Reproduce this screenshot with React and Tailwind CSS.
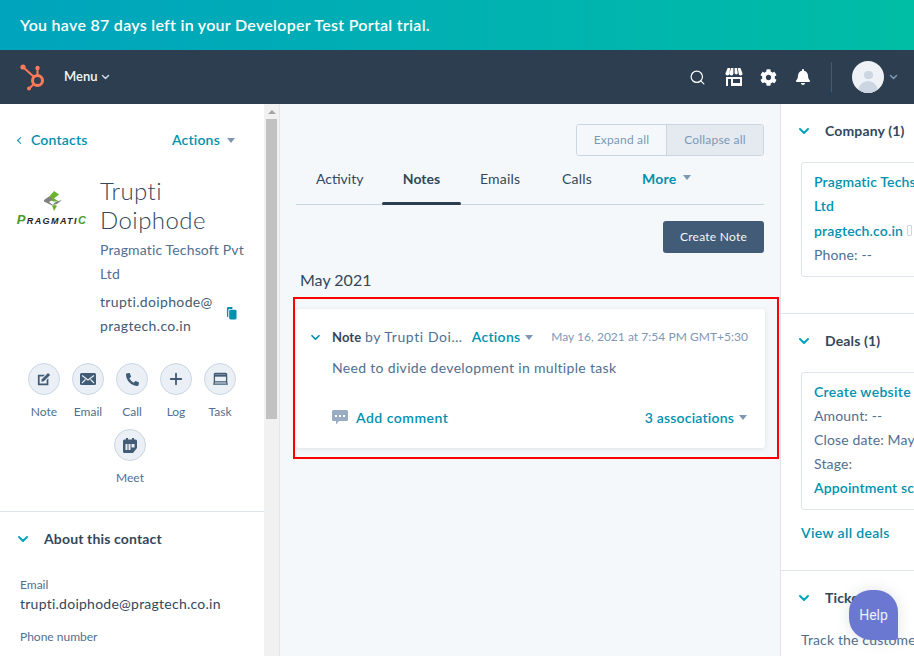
import React from "react";
import { FaCog, FaBell, FaPhoneAlt } from "react-icons/fa";
import { Search, Plus } from "lucide-react";

const Chevron = ({ className = "" }) => (
  <svg viewBox="0 0 12 8" className={className} fill="none" stroke="currentColor" strokeWidth="2" strokeLinecap="round" strokeLinejoin="round"><path d="M2 2l4 4 4-4" /></svg>
);
const Caret = ({ className = "" }) => (
  <span className={`inline-block w-0 h-0 border-l-[4.5px] border-r-[4.5px] border-t-[5px] border-l-transparent border-r-transparent border-t-[#7c98b6] ${className}`} />
);

const Sprocket = () => (
  <svg viewBox="0 0 26 27" className="w-[26px] h-[27px]" fill="none">
    <g stroke="#ff7a59">
      <circle cx="17.5" cy="16.5" r="5" strokeWidth="3" />
      <path d="M3.5 3.5l10 9" strokeWidth="2" />
      <path d="M17.5 5v6" strokeWidth="2" />
      <path d="M13.5 20.5l-4.5 4" strokeWidth="2" />
    </g>
    <circle cx="3" cy="3" r="2.6" fill="#ff7a59" />
    <circle cx="17.5" cy="4" r="2.2" fill="#ff7a59" />
    <circle cx="9" cy="24.5" r="2" fill="#ff7a59" />
  </svg>
);

const Store = () => (
  <svg viewBox="0 0 18 18" className="w-[18px] h-[18px]" fill="#fff">
    <path d="M2.6 0h2.6L4.4 5.6a1.9 1.9 0 0 1-4 0zM6 0h2.4v5.6a2 2 0 0 1-4 0zM9.6 0H12l.8 5.6a2 2 0 0 1-3.2 0zM12.8 0h2.6l2.2 5.6a1.9 1.9 0 0 1-4 0z" />
    <path fillRule="evenodd" d="M1 9h16v9H1zM3 11v7h3v-7zM8 11v4h7v-4z" />
  </svg>
);

const ActionBtn = ({ label, className = "", children }) => (
  <div className={`w-[44px] flex flex-col items-center ${className}`}>
    <div className="w-8 h-8 rounded-full bg-[#eaf0f6] border border-[#cbd6e2] flex items-center justify-center text-[#425b76]">{children}</div>
    <div className="mt-[8px] text-[12px] leading-[18px] text-[#516f90]">{label}</div>
  </div>
);

const SideHead = ({ children }) => (
  <div className="flex items-center">
    <Chevron className="w-[12px] h-[8px] text-[#00a4bd] ml-[17px]" />
    <div className="ml-[15px] text-[14px] leading-5 font-bold text-[#33475b] tracking-[0.15px]">{children}</div>
  </div>
);

export default function App() {
  return (
    <div className="w-[914px] h-[656px] overflow-hidden relative bg-white text-[#33475b] font-['Lato','Noto_Sans',sans-serif]">
      <div className="h-[50px] bg-gradient-to-r from-[#00a4bd] to-[#00bda5] flex items-center pl-5 text-white text-[16px] font-semibold tracking-[0.28px]">
        You have 87 days left in your Developer Test Portal trial.
      </div>

      <div className="h-[54px] bg-[#2d3e50] flex items-center pl-5 pr-[16px] text-white">
        <Sprocket />
        <div className="ml-[18px] text-[13px] font-semibold text-[#f5f8fa]">Menu</div>
        <Chevron className="w-[9px] h-[6px] ml-[4px] text-[#cbd6e2]" />
        <div className="ml-auto flex items-center">
          <Search size={17} strokeWidth={1.7} className="text-white" />
          <div className="ml-[19px]"><Store /></div>
          <div className="ml-[17px]"><FaCog size={17} /></div>
          <div className="ml-[18px]"><FaBell size={16} /></div>
          <div className="ml-[20px] w-px h-[30px] bg-[#425b76]" />
          <div className="ml-[20px] w-8 h-8 rounded-full bg-[#eef2f6] overflow-hidden flex flex-col items-center">
            <div className="mt-[10px] w-[9px] h-[9px] rounded-full bg-[#cbd6e2]" />
            <div className="mt-[2px] w-[20px] h-[14px] rounded-t-full bg-[#cbd6e2]" />
          </div>
          <Chevron className="w-[9px] h-[6px] ml-[5px] text-[#7c98b6]" />
        </div>
      </div>

      <div className="flex h-[552px]">
        {/* left */}
        <div className="w-[264px] shrink-0 overflow-hidden">
          <div className="flex items-center justify-between pl-[18px] pr-[29px] pt-[27px] text-[14px] leading-[18px] font-semibold text-[#0091ae]">
            <div className="flex items-center">
              <span className="w-[5px] h-[5px] border-l border-b border-[#0091ae] rotate-45" />
              <span className="ml-[8px] tracking-[0.2px]">Contacts</span>
            </div>
            <div className="flex items-center">
              <span className="tracking-[0.2px]">Actions</span>
              <Caret className="ml-[7px]" />
            </div>
          </div>

          <div className="flex mt-[27px] pl-[17px]">
            <div className="w-[70px] shrink-0 flex flex-col items-center pt-[15px]">
              <svg viewBox="0 0 20 20" className="w-[20px] h-[20px] ml-[2px]">
                <path d="M11 0l5 3.500-5 4 5 3-6 0-5-3.500z" fill="#6ab42f" />
                <path d="M1 9l5-3.500 4 3-4 2.500 4 3-1 .5-8-4z" fill="#808080" />
                <path d="M19 9l-5 4-4 1 1-2 3-1.500z" fill="#808080" />
                <path d="M9 14.500l3-.5 2 1-3 5z" fill="#6ab42f" />
              </svg>
              <div className="font-['Liberation_Sans',sans-serif] italic font-bold text-[9px] leading-[12px] tracking-[1.4px] whitespace-nowrap mt-[3px] text-[#222]"><span className="text-[#4a9a26] text-[13px]">P</span>RAGMATI<span className="text-[#4a9a26] text-[11px]">C</span></div>
            </div>
            <div className="ml-[13px] w-[150px]">
              <div className="text-[24px] leading-[29px] font-light text-[#33475b] tracking-[0.45px]">Trupti<br />Doiphode</div>
              <div className="mt-[4px] text-[14px] leading-6 text-[#516f90] tracking-[0.15px]">Pragmatic Techsoft Pvt<br />Ltd</div>
              <div className="mt-[4px] flex items-center text-[14px] leading-6 text-[#425b76] tracking-[0.35px]">
                <div>trupti.doiphode@<br />pragtech.co.in</div>
                <svg viewBox="0 0 12 14" className="w-[11px] h-[13px] ml-[13px] -mt-[2px] shrink-0" fill="#0091ae"><path d="M1 1.5C1 .7 1.7 0 2.5 0H7v2H4a1.5 1.5 0 0 0-1.5 1.5V11C1.7 11 1 10.3 1 9.5z" /><rect x="3.5" y="3" width="8" height="10.5" rx="1.2" /></svg>
              </div>
            </div>
          </div>

          <div className="mt-[25px] flex flex-wrap justify-center gap-x-0 gap-y-[8px] px-[20px]">
            <ActionBtn label="Note">
              <svg viewBox="0 0 16 16" className="w-[14px] h-[14px]" fill="currentColor"><path d="M1 3h8L7 5H3v8h8V9l2-2v8H1z" /><path d="M5.5 8.2L12.6 1 15 3.4 7.8 10.6 5 11z" /></svg>
            </ActionBtn>
            <ActionBtn label="Email">
              <svg viewBox="0 0 16 12" className="w-[16px] h-[12px]"><rect width="16" height="12" rx="1.5" fill="currentColor" /><path d="M2 2.5L8 7l6-4.5M2 10l3.500-3.500M14 10l-3.500-3.500" stroke="#eaf0f6" strokeWidth="1.1" fill="none" /></svg>
            </ActionBtn>
            <ActionBtn label="Call"><FaPhoneAlt size={13} /></ActionBtn>
            <ActionBtn label="Log"><Plus size={18} strokeWidth={2.4} /></ActionBtn>
            <ActionBtn label="Task">
              <svg viewBox="0 0 16 14" className="w-[15px] h-[14px]" fill="none" stroke="currentColor"><path d="M2.500 1h11a1 1 0 0 1 1 1v8H1.500V2a1 1 0 0 1 1-1z" strokeWidth="1.4" /><path d="M2 2h12v2.500H2z" fill="currentColor" stroke="none" /><path d="M1.500 10L.8 12.500h14.400L14.500 10" strokeWidth="1.2" /></svg>
            </ActionBtn>
            <ActionBtn label="Meet" className="mr-[4px]">
              <svg viewBox="0 0 14 15" className="w-[14px] h-[15px]" fill="currentColor"><path fillRule="evenodd" d="M3 0h2v1.500h4V0h2v1.500h1.500A1.500 1.500 0 0 1 14 3v7l-4 5H1.500A1.500 1.500 0 0 1 0 13.500V3a1.500 1.500 0 0 1 1.500-1.500H3zM2.500 6v6h2V6zM5.500 6v6h2V6zM8.500 6v3.500h3V6z" /></svg>
            </ActionBtn>
          </div>

          <div className="mt-[24px] border-t border-[#dfe3eb] pt-[17px]">
            <SideHead>About this contact</SideHead>
            <div className="pl-5 mt-[29px] text-[12px] leading-[14px] text-[#516f90]">Email</div>
            <div className="pl-5 mt-[2px] text-[14px] leading-[20px] text-[#33475b] tracking-[0.25px]">trupti.doiphode@pragtech.co.in</div>
            <div className="pl-5 mt-[16px] text-[12px] leading-[14px] text-[#516f90]">Phone number</div>
          </div>
        </div>

        {/* scrollbar */}
        <div className="w-[16px] shrink-0 bg-[#f1f1f1] border-r border-[#e5e5e5] flex flex-col items-center pt-[6px]">
          <span className="w-0 h-0 border-l-[4px] border-r-[4px] border-b-[4px] border-l-transparent border-r-transparent border-b-[#a3a3a3]" />
          <div className="mt-[5px] ml-[-1px] w-[11px] h-[300px] bg-[#c1c1c1]" />
        </div>

        {/* middle */}
        <div className="w-[500px] shrink-0 bg-[#f5f8fa] px-4 pt-5">
          <div className="flex justify-end">
            <div className="flex h-8 text-[12px] font-normal text-[#7c98b6] tracking-[0.2px] rounded-[3px] border border-[#cbd6e2] overflow-hidden">
              <div className="w-[90px] flex items-center justify-center bg-[#f5f8fa] border-r border-[#cbd6e2]">Expand all</div>
              <div className="w-[96px] flex items-center justify-center bg-[#e5e9f0]">Collapse all</div>
            </div>
          </div>
          <div className="mt-[8px] flex h-[41px] border-b border-[#cbd6e2] text-[14px] text-[#33475b]">
            <div className="pl-5 w-[86px] pt-[4px]">Activity</div>
            <div className="relative w-[79px] text-center pt-[4px] font-bold">Notes
              <div className="absolute left-0 right-0 -bottom-[1px] h-[3px] bg-[#2d3e50] rounded-sm" />
            </div>
            <div className="pl-[19px] w-[101px] pt-[4px] tracking-[0.2px]">Emails</div>
            <div className="w-[80px] pt-[4px] tracking-[0.2px]">Calls</div>
            <div className="pt-[4px] font-bold text-[#0091ae] flex items-start tracking-[0.2px]">More<Caret className="ml-[7px] mt-[7px]" /></div>
          </div>
          <div className="mt-[16px] flex justify-end">
            <div className="w-[101px] h-8 rounded-[3px] bg-[#425b76] text-[#f5f8fa] text-[12px] tracking-[0.25px] flex items-center justify-center">Create Note</div>
          </div>
          <div className="mt-[16px] pl-1 text-[16px] leading-[22px] text-[#33475b]">May 2021</div>

          <div className="mt-[6px] -ml-[3px] -mr-[15px] border-2 border-[#f00] pt-[10px] pb-[9px] pl-px pr-3">
            <div className="h-[139px] bg-white rounded-[3px] shadow-[0_1px_5px_rgba(45,62,80,0.12)] pl-[14px] pr-[17px] pt-[20px]">
              <div className="flex items-center text-[14px] leading-[16px] whitespace-nowrap">
                <Chevron className="w-[11px] h-[7px] text-[#0091ae]" />
                <div className="ml-[11px] text-[#33475b]"><span className="font-bold text-[13px] tracking-[0.1px]">Note</span> <span className="text-[#516f90] tracking-[0.6px]">by Trupti Doi…</span></div>
                <div className="ml-[9px] font-semibold text-[#0091ae] text-[14px] tracking-[0.3px] flex items-center">Actions<Caret className="ml-[5px]" /></div>
                <div className="ml-auto text-[12px] text-[#7c98b6] tracking-[0.03px]">May 16, 2021 at 7:54 PM GMT+5:30</div>
              </div>
              <div className="pl-[22px] mt-[14px] text-[14px] leading-[18px] text-[#516f90] tracking-[0.32px]">Need to divide development in multiple task</div>
              <div className="pl-[22px] mt-[30px] flex items-center text-[14px] font-semibold text-[#0091ae]">
                <svg viewBox="0 0 16 15" className="w-4 h-[15px]" fill="#99acc2"><path fillRule="evenodd" d="M1.500 0h13A1.500 1.500 0 0 1 16 1.500v8a1.500 1.500 0 0 1-1.500 1.500H7l-3 3.500V11H1.500A1.500 1.500 0 0 1 0 9.500v-8A1.500 1.500 0 0 1 1.500 0zM3 5v2h2V5zM7 5v2h2V5zM11 5v2h2V5z" /></svg>
                <span className="ml-2 tracking-[0.5px]">Add comment</span>
                <span className="ml-auto flex items-center tracking-[0.2px] mr-[1px]">3 associations<Caret className="ml-[5px]" /></span>
              </div>
            </div>
          </div>
        </div>

        {/* right */}
        <div className="flex-1 min-w-0 overflow-hidden border-l border-[#dfe3eb] pt-[17px]">
          <SideHead>Company (1)</SideHead>
          <div className="ml-[20px] mt-[21px] w-[160px] h-[115px] rounded-l-[3px] border border-[#dfe3eb] pl-3 pt-[7px] text-[14px] leading-[24.3px] whitespace-nowrap font-semibold text-[#0091ae] tracking-[0.15px]">
            <div>Pragmatic Techsoft</div>
            <div>Ltd</div>
            <div className="flex items-center">pragtech.co.in<span className="ml-[4px] w-[5px] h-[11px] rounded-[1px] border border-[#cbd6e2]" /></div>
            <div className="font-normal text-[#516f90]">Phone: --</div>
          </div>
          <div className="mt-9 border-t border-[#dfe3eb] pt-[17px]">
            <SideHead>Deals (1)</SideHead>
            <div className="ml-[20px] mt-[21px] w-[160px] h-[138px] rounded-l-[3px] border border-[#dfe3eb] pl-3 pt-[7px] text-[14px] leading-6 whitespace-nowrap text-[#516f90] tracking-[0.15px]">
              <div className="font-semibold text-[#0091ae] tracking-[0.3px]">Create website</div>
              <div>Amount: --</div>
              <div>Close date: May</div>
              <div>Stage:</div>
              <div className="font-semibold text-[#0091ae]">Appointment sch</div>
            </div>
            <div className="ml-[20px] mt-[13px] text-[14px] leading-5 font-semibold text-[#0091ae] tracking-[0.35px]">View all deals</div>
          </div>
          <div className="mt-[27px] border-t border-[#dfe3eb] pt-[17px]">
            <SideHead>Tickets</SideHead>
            <div className="ml-[20px] mt-[22px] text-[14px] leading-5 whitespace-nowrap text-[#516f90] tracking-[0.15px]">Track the customer</div>
          </div>
        </div>
      </div>

      <div className="absolute left-[849px] top-[590px] w-[49px] h-[50px] bg-[#6a78d1] rounded-t-[22px] rounded-bl-[22px] rounded-br-[3px] shadow-[0_0_14px_rgba(45,62,80,0.15)] flex items-center justify-center text-[#eef0fa] text-[14px] font-['Roboto',sans-serif]">Help</div>
    </div>
  );
}
